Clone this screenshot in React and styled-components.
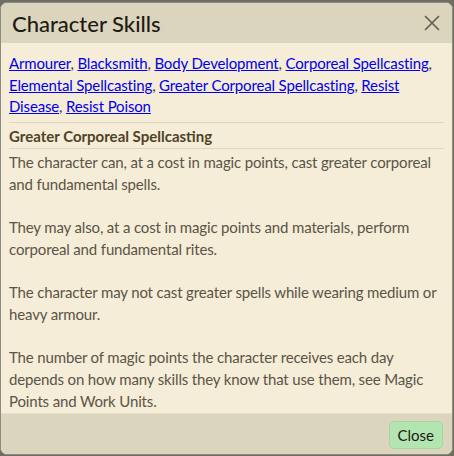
import React from 'react';
import styled, { createGlobalStyle } from 'styled-components';

const GlobalStyle = createGlobalStyle`
  html, body {
    margin: 0;
    padding: 0;
    background: #6f6d64;
  }
  body {
    font-family: Lato, "Noto Sans", sans-serif;
  }
`;

const Page = styled.div`
  width: 454px;
  height: 456px;
  padding-top: 2px;
  box-sizing: border-box;
  overflow: hidden;
`;

const Dialog = styled.div`
  width: 453px;
  height: 453px;
  box-sizing: border-box;
  border: 1px solid #8e8c80;
  border-radius: 7px;
  overflow: hidden;
  display: flex;
  flex-direction: column;
  background: #f5edd7;
`;

const Header = styled.div`
  height: 40px;
  flex: none;
  background: #dcd5bd;
  display: flex;
  align-items: center;
  justify-content: space-between;
  padding: 0 10px 0 11px;
`;

const Title = styled.h1`
  margin: 0;
  font-size: 22px;
  font-weight: 500;
  color: #1c1b17;
`;

const CloseX = styled.button`
  border: none;
  background: none;
  padding: 0;
  width: 20px;
  height: 20px;
  display: flex;
  align-items: center;
  justify-content: center;
  cursor: pointer;
`;

const Body = styled.div`
  flex: 1;
  min-height: 0;
  overflow: hidden;
  padding: 10px 8px 0 8px;
  font-size: 15px;
  letter-spacing: -0.15px;
  line-height: 21.7px;
  color: #5b5447;
`;

const Links = styled.div`
  color: #3a3a3a;
`;

const Link = styled.a`
  color: #0000ee;
  text-decoration: underline;
`;

const Rule = styled.hr`
  border: none;
  border-top: 1px solid #ddd5bd;
  margin: ${p => p.$top}px 0 0 0;
`;

const SkillName = styled.h2`
  margin: 0;
  padding: 3px 0 2px;
  font-size: 15px;
  letter-spacing: 0;
  font-weight: 700;
  color: #4f4327;
  line-height: 20px;
`;

const Text = styled.div`
  padding-top: 3px;
`;

const Para = styled.p`
  margin: 0 0 21.7px;
`;

const Footer = styled.div`
  height: 40px;
  flex: none;
  background: #dcd5bd;
  border-top: 1px solid #e6dfca;
  display: flex;
  align-items: center;
  justify-content: flex-end;
  padding: 0 9px;
`;

const CloseButton = styled.button`
  font-family: inherit;
  font-size: 15px;
  color: #1c1b17;
  background: #b3e5b0;
  border: 1px solid #9fd89c;
  border-radius: 5px;
  padding: 2px 8px;
  height: 28px;
  margin-top: 2px;
`;

const skills = [
  'Armourer',
  'Blacksmith',
  'Body Development',
  'Corporeal Spellcasting',
  'Elemental Spellcasting',
  'Greater Corporeal Spellcasting',
  'Resist Disease',
  'Resist Poison',
];

export default function App() {
  return (
    <>
      <GlobalStyle />
      <Page>
        <Dialog>
          <Header>
            <Title>Character Skills</Title>
            <CloseX aria-label="Close">
              <svg width="18" height="18" viewBox="0 0 18 18">
                <path d="M2 2 L16 16 M16 2 L2 16" stroke="#5f5c52" strokeWidth="1.6" />
              </svg>
            </CloseX>
          </Header>
          <Body>
            <Links>
              {skills.map((s, i) => (
                <React.Fragment key={s}>
                  <Link href="#">{s}</Link>
                  {i < skills.length - 1 ? ', ' : ''}
                </React.Fragment>
              ))}
            </Links>
            <Rule $top={4} />
            <SkillName>Greater Corporeal Spellcasting</SkillName>
            <Rule $top={0} />
            <Text>
              <Para>The character can, at a cost in magic points, cast greater corporeal and fundamental spells.</Para>
              <Para>They may also, at a cost in magic points and materials, perform corporeal and fundamental rites.</Para>
              <Para>The character may not cast greater spells while wearing medium or heavy armour.</Para>
              <Para>The number of magic points the character receives each day depends on how many skills they know that use them, see Magic Points and Work Units.</Para>
            </Text>
          </Body>
          <Footer>
            <CloseButton>Close</CloseButton>
          </Footer>
        </Dialog>
      </Page>
    </>
  );
}
